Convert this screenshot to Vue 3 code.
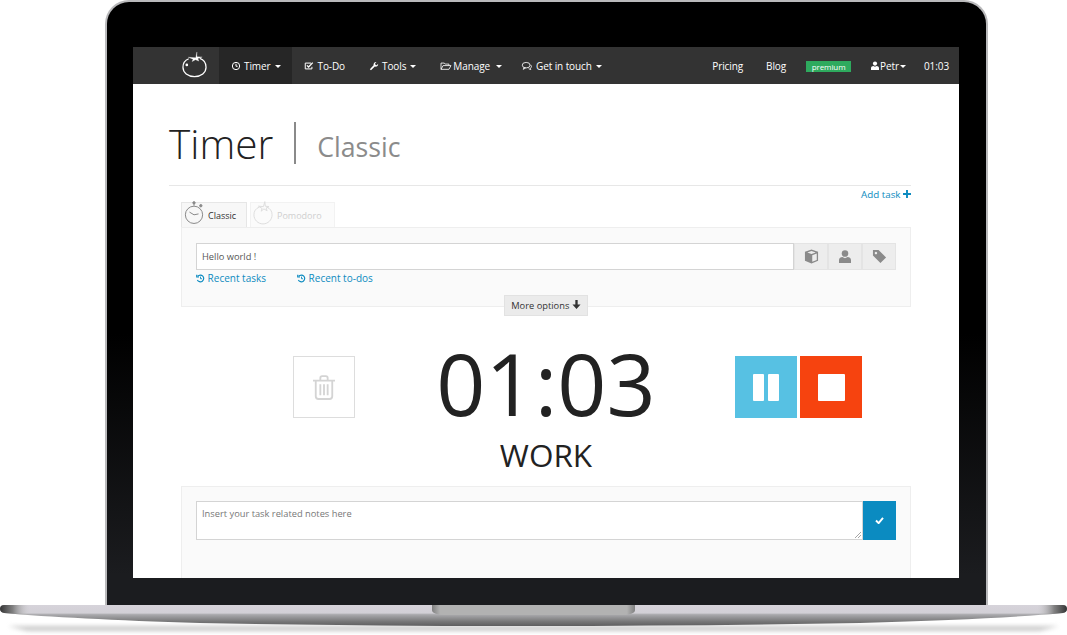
<script setup>
const navLeft = [
  { label: 'Timer', icon: 'clock', caret: true, active: true },
  { label: 'To-Do', icon: 'check', caret: false },
  { label: 'Tools', icon: 'wrench', caret: true },
  { label: 'Manage', icon: 'folder', caret: true },
  { label: 'Get in touch', icon: 'chat', caret: true }
]
</script>

<template>
  <div class="stage">
    <div class="lid">
      <div class="screen">
        <nav class="nav">
          <svg class="logo" viewBox="0 0 26 28" fill="none" stroke="#fff" stroke-width="1.300">
            <path d="M7 8.500C3 10 1 13.500 1 17.500 1 23 6 27 13 27s12-4 12-9.500c0-4.500-2.500-8-6.500-9.300" />
            <path d="M15.500 1.500 14.300 7.500 6.500 7l5 2-1 2.500 3.500-2 3.500 1.500-1-2.600 4.500-1.600-5.500-.3z" fill="#fff" stroke-width=".3" />
            <circle cx="5" cy="15" r="1.400" fill="#fff" stroke="none" />
          </svg>
          <a v-for="n in navLeft" :key="n.label" class="nav-item" :class="[{ active: n.active }, 'nav-' + n.icon]">
            <svg v-if="n.icon === 'clock'" class="ni" viewBox="0 0 12 12" fill="none" stroke="#fff" stroke-width="1.200"><circle cx="6" cy="6" r="4.400" /><path d="M6 3.300V6.300H8" /></svg>
            <svg v-if="n.icon === 'check'" class="ni" viewBox="0 0 12 12" fill="none" stroke="#fff" stroke-width="1.200"><path d="M9.500 7v2.500h-8v-7h7" /><path d="M3.500 5.200 5.500 7.200 10.500 2" stroke-width="1.500" /></svg>
            <svg v-if="n.icon === 'wrench'" class="ni" viewBox="0 0 12 12" fill="#fff"><path d="M1 9.800 5.500 5.200C5 3.300 6.500 1 9 1.200L7.300 3l.4 1.600 1.600.4L11 3.300c.2 2.500-2 4-4 3.400L2.400 11.200z" /></svg>
            <svg v-if="n.icon === 'folder'" class="ni ni-w" viewBox="0 0 14 12" fill="none" stroke="#fff" stroke-width="1"><path d="M1 10V2.500h4l1 1.200h4.500V5.500M1 10h9.500l2.500-4.500H3.500z" /></svg>
            <svg v-if="n.icon === 'chat'" class="ni ni-w" viewBox="0 0 14 12" fill="none" stroke="#fff" stroke-width="1"><ellipse cx="6" cy="5" rx="4.700" ry="3.300" /><path d="M3.500 8 2.500 10 5.500 8.300M11 4.500c2 1.500 1.500 3.500 0 4.300l.5 1.500-2.500-1" /></svg>
            <span>{{ n.label }}</span>
            <i v-if="n.caret" class="caret" />
          </a>
          <div class="nav-right">
            <a class="nav-link pricing">Pricing</a>
            <a class="nav-link blog">Blog</a>
            <span class="premium">premium</span>
            <a class="nav-link petr">
              <svg class="ni-user" viewBox="0 0 10 12" fill="#fff"><circle cx="5" cy="3" r="2.600" /><path d="M0 11V8.500C0 7 1.500 6 3 6l2 1 2-1c1.500 0 3 1 3 2.500V11z" /></svg>
              Petr<i class="caret tight" />
            </a>
            <span class="nav-link clock">01:03</span>
          </div>
        </nav>

        <main class="main">
          <header class="title-row">
            <h1>Timer</h1>
            <span class="title-sep" />
            <span class="title-sub">Classic</span>
          </header>
          <div class="add-row">
            <a class="link add">Add task <svg class="plus" viewBox="0 0 10 10" fill="#0d8bc0"><path d="M3.800 0h2.400v3.800H10v2.400H6.200V10H3.800V6.200H0V3.800h3.800z" /></svg></a>
          </div>

          <div class="block">
            <div class="tabs">
              <div class="tab on">
                <svg class="tab-ic" viewBox="0 0 22 26" fill="none" stroke="#8a8a8a" stroke-width="1.100">
                  <circle cx="11" cy="15" r="9.500" />
                  <path d="M11 15 6 12M11 15l5-1M11 5V2" />
                  <circle cx="11" cy="1.800" r="1.300" fill="#8a8a8a" /><circle cx="18.500" cy="5" r="1.300" fill="#8a8a8a" />
                </svg>
                Classic
              </div>
              <div class="tab off">
                <svg class="tab-ic" viewBox="0 0 22 26" fill="none" stroke="#dedede" stroke-width="1.100">
                  <path d="M7 6.500C3 8 1 11 1 15c0 5.500 4.500 10 10 10s10-4.500 10-10c0-4-2-7-6-8.500" />
                  <path d="M13 0.500 11.500 6 6 5.500l4 2.500-1 3 3-2.500 3.500 2-1-3 3-1.500-4-.5z" />
                </svg>
                Pomodoro
              </div>
            </div>
            <section class="panel">
              <div class="task-row">
                <div class="task-input">Hello world !</div>
                <button class="addon">
                  <svg viewBox="0 0 16 16" width="15" height="15" fill="#8a8a8a"><path d="M8 .5 15 3v9.500L8 15.500 1 12.500V3zM8 2 3.500 3.600 8 5.300l4.500-1.700zM8.800 6.600v7l4.800-2V4.800z" fill-rule="evenodd" /></svg>
                </button>
                <button class="addon">
                  <svg viewBox="0 0 14 16" width="12" height="14" fill="#8a8a8a"><circle cx="7" cy="4" r="3.800" /><path d="M0 15v-3.500C0 9.300 2 8 4 8l3 1.500L10 8c2 0 4 1.300 4 3.500V15z" /></svg>
                </button>
                <button class="addon">
                  <svg viewBox="0 0 16 16" width="15" height="15" fill="#8a8a8a"><path d="M1 1h6l8 8-6 6-8-8zM4.200 3a1.300 1.300 0 1 0 .01 0z" fill-rule="evenodd" /></svg>
                </button>
              </div>
              <div class="recent">
                <a class="link"><svg class="hist" viewBox="0 0 12 12" fill="none" stroke="#0d8bc0" stroke-width="1.600"><path d="M2.300 3A4.500 4.500 0 1 1 1.800 8" /><path d="M1 1v3h3" /><path d="M6 3.500V6.300H8" stroke-width="1.200" /></svg> Recent tasks</a>
                <a class="link"><svg class="hist" viewBox="0 0 12 12" fill="none" stroke="#0d8bc0" stroke-width="1.600"><path d="M2.300 3A4.500 4.500 0 1 1 1.800 8" /><path d="M1 1v3h3" /><path d="M6 3.500V6.300H8" stroke-width="1.200" /></svg> Recent to-dos</a>
              </div>
            </section>
            <button class="more">More options <svg viewBox="0 0 10 10" width="9" height="9" fill="#333"><path d="M3.700 0h2.600v5H9.500L5 10 .5 5h3.200z" /></svg></button>
          </div>

          <div class="timer-row">
            <button class="trash">
              <svg viewBox="0 0 24 27" width="22" height="27" fill="none" stroke="#d4d4d4" stroke-width="2"><path d="M0 6h24M8 6V3q0-2 2-2h4q2 0 2 2v3M3 6v17q0 3 3 3h12q3 0 3-3V6M8 10v12M12 10v12M16 10v12" /></svg>
            </button>
            <div class="time">
              <div class="digits">01:03</div>
              <div class="phase">WORK</div>
            </div>
            <div class="controls">
              <button class="ctl pause"><i /><i /></button>
              <button class="ctl stop"><i /></button>
            </div>
          </div>

          <section class="notes">
            <div class="note-row">
              <div class="note-input">
                Insert your task related notes here
                <svg class="grip" viewBox="0 0 8 8" stroke="#888" stroke-width="1"><path d="M0 8 8 0M4 8l4-4" /></svg>
              </div>
              <button class="note-ok">
                <svg viewBox="0 0 10 8" width="9" height="7" fill="none" stroke="#fff" stroke-width="2.200"><path d="M1 4l3 3 5-6" /></svg>
              </button>
            </div>
          </section>
        </main>
      </div>
    </div>

    <svg class="base" viewBox="0 0 1067 30" width="1067" height="30">
      <defs>
        <linearGradient id="bv" x1="0" y1="0" x2="0" y2="1">
          <stop offset="0" stop-color="#d6d3da" />
          <stop offset=".38" stop-color="#d2d0d6" />
          <stop offset=".46" stop-color="#a9a9ac" />
          <stop offset=".8" stop-color="#757576" />
          <stop offset="1" stop-color="#5e5e5f" />
        </linearGradient>
        <linearGradient id="bh" x1="0" y1="0" x2="1" y2="0">
          <stop offset="0" stop-color="#333" stop-opacity="1" />
          <stop offset=".012" stop-color="#777" stop-opacity=".9" />
          <stop offset=".028" stop-color="#ccc" stop-opacity="0" />
          <stop offset=".972" stop-color="#ccc" stop-opacity="0" />
          <stop offset=".988" stop-color="#777" stop-opacity=".9" />
          <stop offset="1" stop-color="#333" stop-opacity="1" />
        </linearGradient>
        <linearGradient id="notch" x1="0" y1="0" x2="1" y2="0">
          <stop offset="0" stop-color="#808080" />
          <stop offset=".04" stop-color="#b2b2b2" />
          <stop offset=".96" stop-color="#b2b2b2" />
          <stop offset="1" stop-color="#808080" />
        </linearGradient>
        <filter id="soft" x="-5%" y="-100%" width="110%" height="300%"><feGaussianBlur stdDeviation="2" /></filter>
      </defs>
      <path d="M8 21H1059L1040 26H27z" fill="#9a9a9a" opacity=".5" filter="url(#soft)" />
      <path d="M4 0H1063Q1067 0 1067 4 1067 7 1063 8 1000 14 860 18 700 21 533 21 360 21 200 18 70 14 4 8 0 7 0 4 0 0 4 0Z" fill="url(#bv)" />
      <path d="M4 0H1063Q1067 0 1067 4 1067 7 1063 8 1000 14 860 18 700 21 533 21 360 21 200 18 70 14 4 8 0 7 0 4 0 0 4 0Z" fill="url(#bh)" />
      <path d="M432 0H635V5Q635 10 620 10H447Q432 10 432 5Z" fill="url(#notch)" />
    </svg>
  </div>
</template>

<style scoped>
.stage{width:1067px;height:635px;overflow:hidden;background:#fff;font-family:'Open Sans',sans-serif;color:#333}
.lid{box-sizing:border-box;width:883px;height:605px;margin-left:105px;padding:45px 27px 27px 26px;background:linear-gradient(#000 0,#000 55%,#1b1c1f 95%);border:2px solid #b9b9bb;border-bottom:0;border-radius:24px 24px 0 0}
.screen{height:531px;background:#fff;overflow:hidden}
.nav{display:flex;align-items:stretch;height:37px;padding-left:49px;background:#333;color:#fff;font-size:10px;letter-spacing:-.1px}
.logo{width:25px;height:28px;margin:3px 12px 0 0;flex:none}
.nav-item{display:flex;align-items:center;gap:3px;padding:1px 12px 0}
.nav-item.active{background:#262626;padding:1px 11px 0 12px}
.nav-check{gap:4px}
.nav-folder{gap:1px}
.nav-folder .caret{margin-left:5px}
.nav-chat{padding-left:7px}
.ni{width:10px;height:10px;flex:none}
.ni-w{width:12px;height:10px}
.caret{display:inline-block;width:0;height:0;margin-left:1px;border-top:3px solid #fff;border-left:3px solid transparent;border-right:3px solid transparent}
.caret.tight{margin-left:0;vertical-align:middle}
.nav-right{display:flex;align-items:center;margin-left:auto;padding:1px 10px 0 0}
.nav-link{display:flex;align-items:center}
.pricing{margin-right:23px}
.blog{margin-right:20px}
.premium{box-sizing:border-box;width:45px;height:11px;margin-right:20px;background:#2eaa5e;color:#fff;font-size:8px;line-height:11px;text-align:center}
.petr{gap:1px;margin-right:18px}
.ni-user{width:8px;height:10px}
.main{padding:0 48px 0 36px}
.title-row{display:flex;align-items:center;height:102px;padding-top:17px;box-sizing:border-box;border-bottom:1px solid #e7e7e7}
h1{margin:0;font-size:40.500px;font-weight:300;color:#222}
.title-sep{width:2px;height:42px;margin:0 21px;background:#8a8a8a}
.title-sub{margin-top:6px;font-size:26.700px;color:#8b8b8b}
.add-row{display:flex;justify-content:flex-end;height:16px;line-height:17px}
.link{color:#0d8bc0;font-size:10px;white-space:nowrap}
.add{font-size:9.800px}
.plus{width:8px;height:8px}
.block{position:relative;margin-left:12px;height:132px;display:flex;flex-direction:column}
.tabs{display:flex;gap:3px;height:25px}
.tab{display:flex;align-items:center;gap:4px;box-sizing:border-box;height:25px;font-size:9px;border:1px solid #e6e6e6;border-bottom:0;padding:0 8px 0 2px}
.tab.on{width:66px;background:#f7f7f7;color:#333}
.tab.off{width:85px;background:#fbfbfb;color:#cfcfcf;border-color:#f2f2f2}
.tab-ic{width:20px;height:24px;margin-top:-4px;flex:none}
.panel{box-sizing:border-box;height:80px;padding:15px 14px 0;background:#fafafa;border:1px solid #eee}
.task-row{display:flex;height:27px}
.task-input{flex:1;box-sizing:border-box;padding-left:5px;background:#fff;border:1px solid #d4d4d4;font-size:9.300px;line-height:25px;color:#555}
.addon{display:flex;align-items:center;justify-content:center;width:34px;margin:0;padding:0;background:#ededed;border:1px solid #e4e4e4}
.recent{display:flex;gap:31px;margin-top:1px;line-height:15px}
.hist{width:9px;height:9px;vertical-align:-1px}
.more{position:absolute;left:323px;top:93px;box-sizing:border-box;width:84px;height:21px;padding:0;background:#ebebeb;border:1px solid #e2e2e2;font-family:inherit;font-size:9.300px;color:#333}
.timer-row{display:flex;height:169px;margin:-17px 0 0 124px}
.trash{display:flex;align-items:center;justify-content:center;box-sizing:border-box;width:62px;height:62px;margin-top:39px;padding:0;background:#fff;border:1px solid #ddd}
.time{width:382px;text-align:center}
.digits{height:86px;margin-top:23px;font-size:86px;line-height:86px;color:#222}
.phase{margin-top:9px;font-size:31.500px;line-height:40px;color:#222}
.controls{display:flex;gap:3px;margin:39px 0 0 -2px}
.ctl{display:flex;align-items:center;justify-content:center;width:62px;height:62px;padding:0;border:0}
.pause{gap:4px;background:#57c1e3}
.pause i{width:11px;height:27px;background:#fff;border-radius:1px}
.stop{background:#f6430f}
.stop i{width:27px;height:27px;background:#fff;border-radius:1px}
.notes{box-sizing:border-box;height:100px;margin-left:12px;padding:14px 14px 0;background:#fafafa;border:1px solid #eee}
.note-row{display:flex;height:39px}
.note-input{position:relative;flex:1;box-sizing:border-box;padding:5px;background:#fff;border:1px solid #d4d4d4;font-size:9.300px;line-height:14px;color:#777}
.grip{position:absolute;right:1px;bottom:1px;width:6px;height:6px}
.note-ok{display:flex;align-items:center;justify-content:center;width:33px;padding:0;background:#0b8bc1;border:0}
.base{display:block}
</style>

<style>
html,body{margin:0;background:#fff}
</style>
